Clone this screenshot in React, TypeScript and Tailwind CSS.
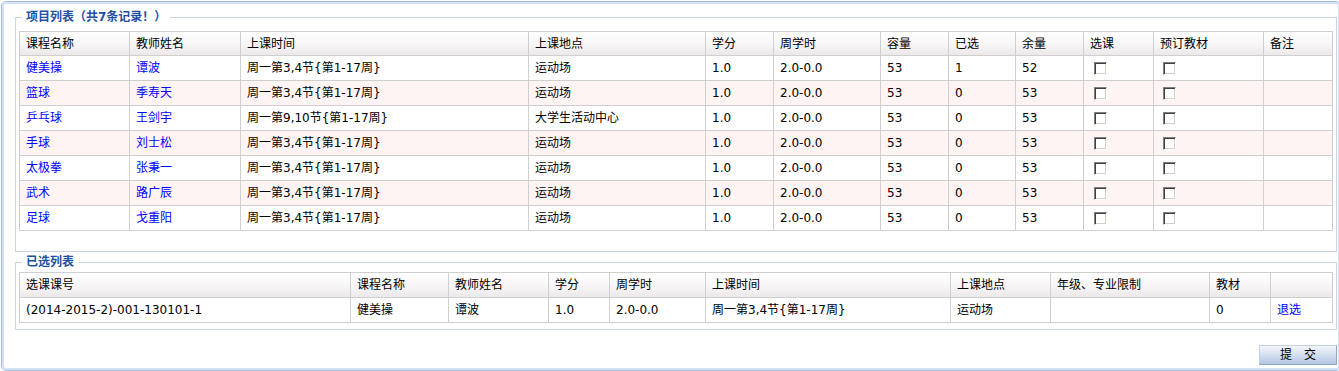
import React from "react";

const courses = [
  ["健美操", "谭波", "周一第3,4节{第1-17周}", "运动场", "1.0", "2.0-0.0", "53", "1", "52"],
  ["篮球", "季寿天", "周一第3,4节{第1-17周}", "运动场", "1.0", "2.0-0.0", "53", "0", "53"],
  ["乒乓球", "王剑宇", "周一第9,10节{第1-17周}", "大学生活动中心", "1.0", "2.0-0.0", "53", "0", "53"],
  ["手球", "刘士松", "周一第3,4节{第1-17周}", "运动场", "1.0", "2.0-0.0", "53", "0", "53"],
  ["太极拳", "张秉一", "周一第3,4节{第1-17周}", "运动场", "1.0", "2.0-0.0", "53", "0", "53"],
  ["武术", "路广辰", "周一第3,4节{第1-17周}", "运动场", "1.0", "2.0-0.0", "53", "0", "53"],
  ["足球", "戈重阳", "周一第3,4节{第1-17周}", "运动场", "1.0", "2.0-0.0", "53", "0", "53"],
];

const headers1 = ["课程名称", "教师姓名", "上课时间", "上课地点", "学分", "周学时", "容量", "已选", "余量", "选课", "预订教材", "备注"];
const widths1 = ["w-[110px]", "w-[111px]", "w-[288px]", "w-[177px]", "w-[68px]", "w-[107px]", "w-[68px]", "w-[67px]", "w-[68px]", "w-[70px]", "w-[110px]", "w-[69px]"];

const headers2 = ["选课课号", "课程名称", "教师姓名", "学分", "周学时", "上课时间", "上课地点", "年级、专业限制", "教材", ""];
const widths2 = ["w-[331px]", "w-[98px]", "w-[100px]", "w-[61px]", "w-[96px]", "w-[245px]", "w-[100px]", "w-[159px]", "w-[61px]", "w-[62px]"];

const cell = "border border-[#cfcfcf] pl-[6px] text-left font-normal align-middle whitespace-nowrap";
const head = "h-[24px] bg-linear-to-b from-white via-[#f8f6f7] to-[#ece7e9]";

const Box = () => (
  <span className="inline-block align-middle w-[13px] h-[13px] bg-white border border-t-[#808080] border-l-[#808080] border-r-white border-b-white shadow-[inset_1px_1px_0_#404040,inset_-1px_-1px_0_#d4d0c8]" />
);

const Legend = ({ text }: { text: string }) => (
  <legend className="ml-[3px] px-[4px] text-[12px] leading-[14px] font-bold text-[#1f4fa0]">{text}</legend>
);

export default function App() {
  return (
    <div className="w-[1339px] h-[371px] overflow-hidden bg-white text-[12px] text-black font-['DejaVu_Sans','Noto_Sans_CJK_SC',sans-serif]">
      <div className="ml-[1px] mt-[1px] w-[1340px] h-[370px] rounded-[5px] border border-[#a5bde3]">
        <div className="h-full rounded-[4px] border-2 border-[#d6e2f4] pl-[11px] pt-[6px]">
          <div className="w-[1322px] flex flex-col">
            <fieldset className="border border-[#c7d3e6] px-[3px] pt-[7px] pb-[20px]">
              <Legend text="项目列表（共7条记录！）" />
              <table className="w-[1314px] table-fixed border-collapse">
                <colgroup>
                  {widths1.map((w, i) => (
                    <col key={i} className={w} />
                  ))}
                </colgroup>
                <thead>
                  <tr className={head}>
                    {headers1.map((h) => (
                      <th key={h} className={cell}>
                        {h}
                      </th>
                    ))}
                  </tr>
                </thead>
                <tbody>
                  {courses.map((c, r) => (
                    <tr key={c[0]} className={`h-[25px] ${r % 2 === 1 ? "bg-[#fff4f4]" : "bg-white"}`}>
                      <td className={`${cell} text-[#0000ff]`}>{c[0]}</td>
                      <td className={`${cell} text-[#0000ff]`}>{c[1]}</td>
                      {c.slice(2).map((v, i) => (
                        <td key={i} className={cell}>
                          {v}
                        </td>
                      ))}
                      <td className={`${cell} pl-[10px]`}>
                        <Box />
                      </td>
                      <td className={`${cell} pl-[9px]`}>
                        <Box />
                      </td>
                      <td className={cell}></td>
                    </tr>
                  ))}
                </tbody>
              </table>
            </fieldset>

            <fieldset className="mt-[3px] border border-[#c7d3e6] px-[3px] pt-[3px] pb-[6px]">
              <Legend text="已选列表" />
              <table className="w-[1314px] table-fixed border-collapse">
                <colgroup>
                  {widths2.map((w, i) => (
                    <col key={i} className={w} />
                  ))}
                </colgroup>
                <thead>
                  <tr className="h-[25px] bg-linear-to-b from-white via-[#f8f6f7] to-[#ece7e9]">
                    {headers2.map((h, i) => (
                      <th key={i} className={cell}>
                        {h}
                      </th>
                    ))}
                  </tr>
                </thead>
                <tbody>
                  <tr className="h-[25px] bg-white">
                    <td className={cell}>(2014-2015-2)-001-130101-1</td>
                    <td className={cell}>健美操</td>
                    <td className={cell}>谭波</td>
                    <td className={cell}>1.0</td>
                    <td className={cell}>2.0-0.0</td>
                    <td className={cell}>周一第3,4节{"{"}第1-17周{"}"}</td>
                    <td className={cell}>运动场</td>
                    <td className={cell}></td>
                    <td className={cell}>0</td>
                    <td className={`${cell} text-[#0000ff]`}>退选</td>
                  </tr>
                </tbody>
              </table>
            </fieldset>

            <div className="mt-[15px] flex justify-end">
              <button className="w-[78px] h-[20px] border border-t-[#c2cee2] border-l-[#c2cee2] border-r-[#8ea4c8] border-b-[#8ea4c8] bg-linear-to-b from-[#f4f7fc] to-[#b3c6e4] text-[12px] leading-[18px] text-black">
                提　交
              </button>
            </div>
          </div>
        </div>
      </div>
    </div>
  );
}
